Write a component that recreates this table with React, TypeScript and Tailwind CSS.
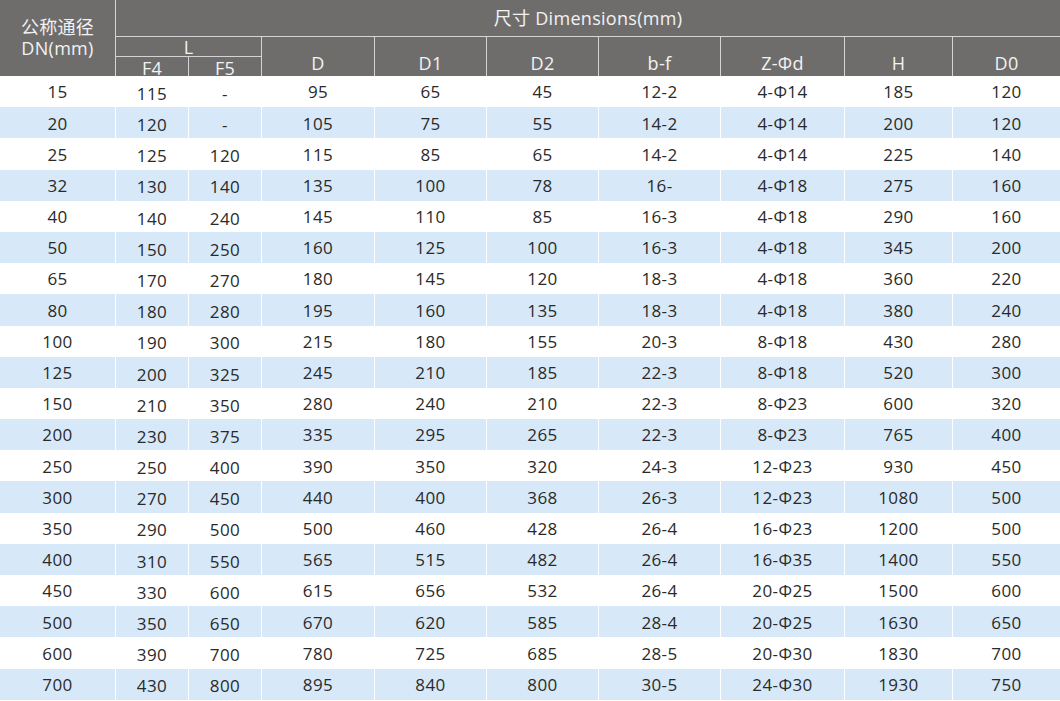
import React from "react";

const rows: string[][] = [
  ["15", "115", "-", "95", "65", "45", "12-2", "4-Φ14", "185", "120"],
  ["20", "120", "-", "105", "75", "55", "14-2", "4-Φ14", "200", "120"],
  ["25", "125", "120", "115", "85", "65", "14-2", "4-Φ14", "225", "140"],
  ["32", "130", "140", "135", "100", "78", "16-", "4-Φ18", "275", "160"],
  ["40", "140", "240", "145", "110", "85", "16-3", "4-Φ18", "290", "160"],
  ["50", "150", "250", "160", "125", "100", "16-3", "4-Φ18", "345", "200"],
  ["65", "170", "270", "180", "145", "120", "18-3", "4-Φ18", "360", "220"],
  ["80", "180", "280", "195", "160", "135", "18-3", "4-Φ18", "380", "240"],
  ["100", "190", "300", "215", "180", "155", "20-3", "8-Φ18", "430", "280"],
  ["125", "200", "325", "245", "210", "185", "22-3", "8-Φ18", "520", "300"],
  ["150", "210", "350", "280", "240", "210", "22-3", "8-Φ23", "600", "320"],
  ["200", "230", "375", "335", "295", "265", "22-3", "8-Φ23", "765", "400"],
  ["250", "250", "400", "390", "350", "320", "24-3", "12-Φ23", "930", "450"],
  ["300", "270", "450", "440", "400", "368", "26-3", "12-Φ23", "1080", "500"],
  ["350", "290", "500", "500", "460", "428", "26-4", "16-Φ23", "1200", "500"],
  ["400", "310", "550", "565", "515", "482", "26-4", "16-Φ35", "1400", "550"],
  ["450", "330", "600", "615", "656", "532", "26-4", "20-Φ25", "1500", "600"],
  ["500", "350", "650", "670", "620", "585", "28-4", "20-Φ25", "1630", "650"],
  ["600", "390", "700", "780", "725", "685", "28-5", "20-Φ30", "1830", "700"],
  ["700", "430", "800", "895", "840", "800", "30-5", "24-Φ30", "1930", "750"],
];

const widths = [
  "w-[115px]",
  "w-[73px]",
  "w-[73px]",
  "w-[113px]",
  "w-[112px]",
  "w-[112px]",
  "w-[122px]",
  "w-[124px]",
  "w-[108px]",
  "w-[108px]",
];

const font = { fontFamily: '"Open Sans", "Noto Sans CJK SC", sans-serif' };

export default function App() {
  return (
    <div
      className="w-[1060px] h-[701px] bg-white text-[17px] overflow-hidden"
      style={font}
    >
      {/* Header */}
      <div className="flex h-[76px] bg-[#6f6d6c] text-[#f2f2f2] text-[18px] tracking-[0.3px]">
        <div className="w-[115px] shrink-0 flex flex-col items-center justify-center leading-[21px] pb-[1px]">
          <span>公称通径</span>
          <span>DN(mm)</span>
        </div>
        <div className="w-[945px] shrink-0 flex flex-col border-l border-[#d4d4d4]">
          <div className="h-[37px] shrink-0 flex items-center justify-center border-b border-[#d4d4d4]">
            尺寸 Dimensions(mm)
          </div>
          <div className="flex flex-1">
            <div className="w-[145px] shrink-0 flex flex-col">
              <div className="h-[20px] shrink-0 flex items-center justify-center border-b border-[#d4d4d4] leading-none pt-[1px]">
                L
              </div>
              <div className="flex flex-1">
                <div className="w-[72px] shrink-0 flex items-center justify-center pt-[2px] leading-none">
                  F4
                </div>
                <div className="w-[73px] shrink-0 flex items-center justify-center border-l border-[#d4d4d4] pt-[2px] leading-none">
                  F5
                </div>
              </div>
            </div>
            {["D", "D1", "D2", "b-f", "Z-Φd", "H", "D0"].map((h, i) => (
              <div
                key={h}
                className={`${widths[i + 3]} shrink-0 flex items-center justify-center border-l border-[#d4d4d4] pt-[12px]`}
              >
                {h}
              </div>
            ))}
          </div>
        </div>
      </div>
      {/* Body */}
      <div className="flex flex-col text-[#2a2a2a] tracking-[0.4px]">
        {rows.map((r, ri) => (
          <div
            key={ri}
            className={`flex shrink-0 h-[31.2px] ${ri % 2 === 1 ? "bg-[#d7e9f8]" : "bg-white"}`}
          >
            {r.map((c, ci) => (
              <div
                key={ci}
                className={`${widths[ci]} shrink-0 flex items-center justify-center ${
                  ci > 0 ? "border-l border-white" : ""
                } ${ci === 1 || ci === 2 ? "pt-[4px]" : "pt-[1px]"}`}
              >
                {c}
              </div>
            ))}
          </div>
        ))}
      </div>
    </div>
  );
}
